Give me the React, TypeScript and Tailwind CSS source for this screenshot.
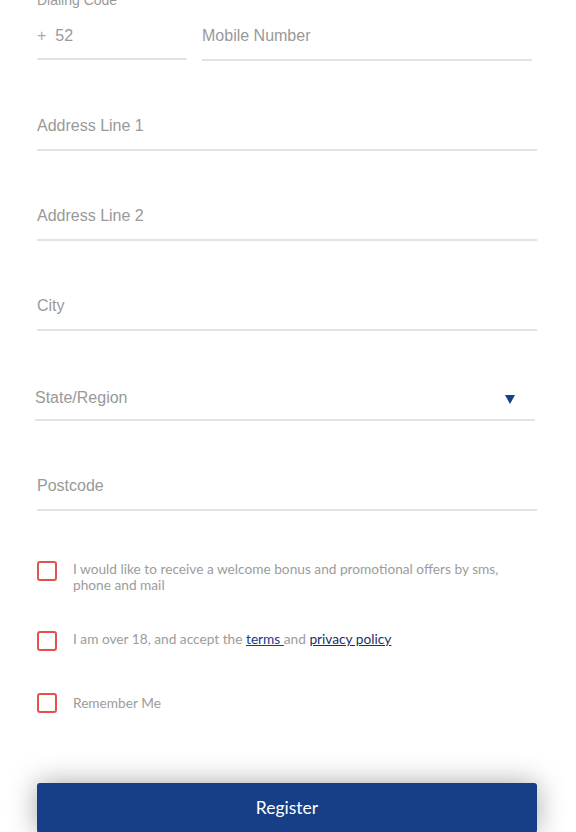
import React from "react";

const field = "font-['Liberation_Sans',Arial,sans-serif] text-[16px] text-[#999]";

function Field({ label, className = "" }: { label: string; className?: string }) {
  return (
    <div className={`h-[90px] flex flex-col justify-end ${className}`}>
      <div className="h-[48px] flex items-center border-b-2 border-[#e3e3e3]">
        <span className={field}>{label}</span>
      </div>
    </div>
  );
}

function Check({ children, className = "" }: { children: React.ReactNode; className?: string }) {
  return (
    <div className={`flex items-start ${className}`}>
      <div className="w-[20px] h-[20px] shrink-0 border-2 border-[#e2534b] rounded-[3px]" />
      <div className="ml-[16px] text-[13.7px] leading-[16px] text-[#9c9c9c] font-['Lato',sans-serif] pr-[30px]">
        {children}
      </div>
    </div>
  );
}

export default function App() {
  return (
    <div className="w-[576px] h-[832px] overflow-hidden bg-white">
      <div className="px-[37px] pr-[39px]">
        <div className="h-[61px] flex gap-[15px] relative">
          <div className="absolute left-0 top-[-8px] text-[14px] leading-[16px] text-[#999] font-['Liberation_Sans',Arial,sans-serif]">
            Dialing Code
          </div>
          <div className="w-[150px] flex flex-col justify-end">
            <div className="h-[47px] flex items-center border-b-2 border-[#e3e3e3] mb-[1px]">
              <span className={`${field} text-[#aaa]`}>+</span>
              <span className={`${field} text-[#555] ml-[9px]`}>52</span>
            </div>
          </div>
          <div className="w-[330px] flex flex-col justify-end">
            <div className="h-[48px] flex items-center border-b-2 border-[#e3e3e3]">
              <span className={field}>Mobile Number</span>
            </div>
          </div>
        </div>
        <Field label="Address Line 1" />
        <Field label="Address Line 2" />
        <Field label="City" />
        <div className="h-[90px] flex flex-col justify-end ml-[-2px] mr-[2px]">
          <div className="h-[48px] flex items-center justify-between border-b-2 border-[#e3e3e3] pt-[4px]">
            <span className={field}>State/Region</span>
            <svg width="10" height="9" viewBox="0 0 10 9" className="mr-[20px] mt-[2px]">
              <polygon points="0,0 10,0 5,9" fill="#1a3f8a" />
            </svg>
          </div>
        </div>
        <Field label="Postcode" />

        <Check className="mt-[50px]">
          I would like to receive a welcome bonus and promotional offers by sms, phone and mail
        </Check>
        <Check className="mt-[38px]">
          I am over 18, and accept the{" "}
          <a className="underline text-[#1a3a8a]" href="#">terms </a>and{" "}
          <a className="underline text-[#1c2f6e]" href="#">privacy policy</a>
        </Check>
        <Check className="mt-[42px]">
          <span className="block mt-[2px]">Remember Me</span>
        </Check>

        <button className="mt-[70px] w-[500px] h-[50px] bg-[#163f87] rounded-[3px] text-white text-[17.5px] font-['Lato',sans-serif] shadow-[0_0_28px_rgba(0,0,0,0.35)] pt-[1px]">
          Register
        </button>
      </div>
    </div>
  );
}
